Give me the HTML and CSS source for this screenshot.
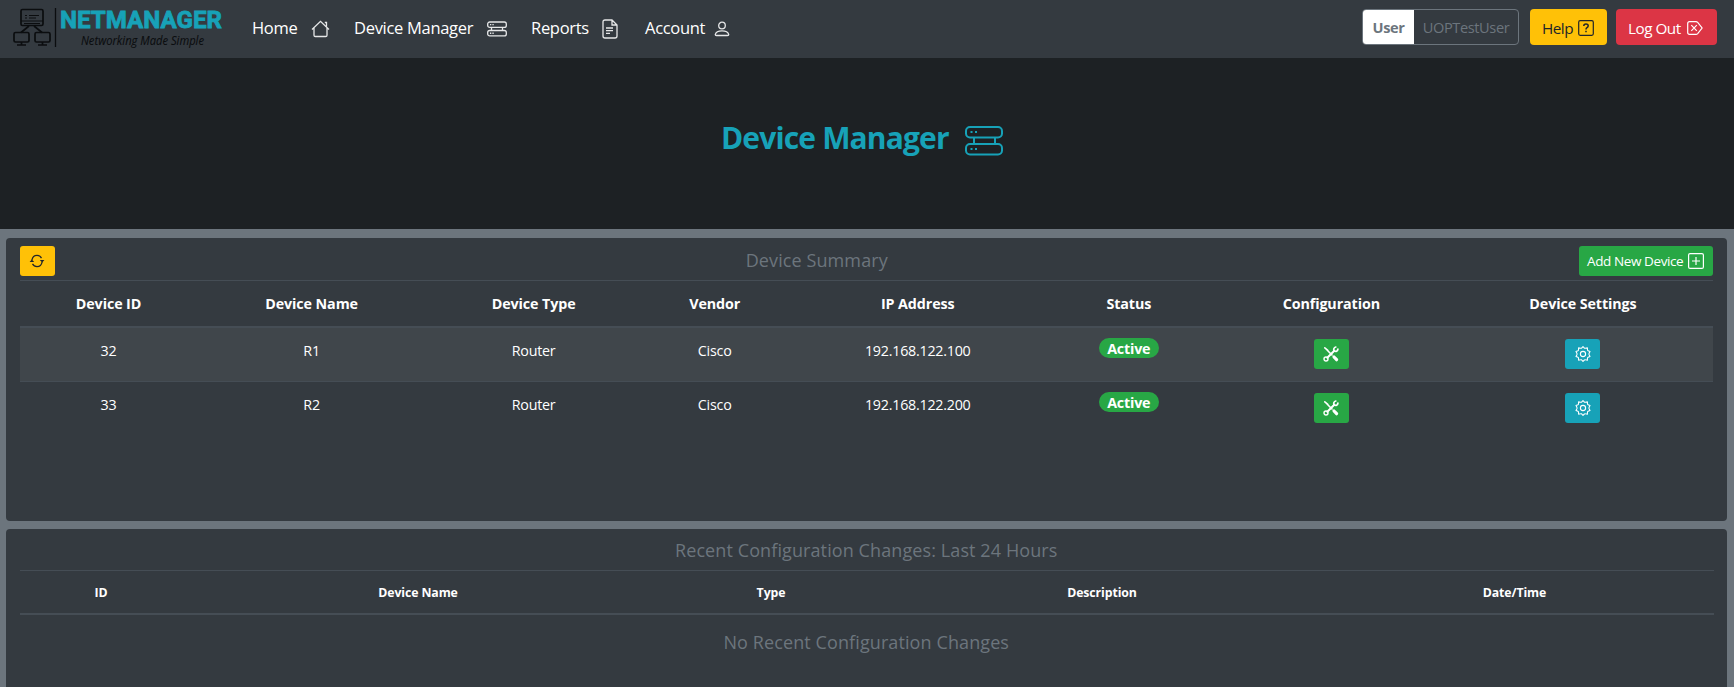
FILE: index.html
```html
<!DOCTYPE html>
<html lang="en">
<head>
<meta charset="utf-8">
<title>Device Manager</title>
<link rel="stylesheet" href="styles.css">
</head>
<body>
<svg class="defs" width="0" height="0">
  <symbol id="stack" viewBox="0 0 38 30"><g fill="none" stroke="currentColor" stroke-width="2"><rect x="1" y="1" width="36" height="10.5" rx="4"/><rect x="1" y="18" width="36" height="10.5" rx="4"/><path d="M9 11.5V18M30 11.5V18"/></g><path fill="currentColor" d="M5.5 5h2v2h-2zM10 5h2v2h-2zM5.5 22h2v2h-2zM10 22h2v2h-2z"/></symbol>
  <symbol id="stack-bold" viewBox="0 0 20 16"><g fill="none" stroke="currentColor" stroke-width="1.3"><rect x=".7" y="1" width="18.600" height="5.400" rx="2"/><rect x=".7" y="9.500" width="18.600" height="5.400" rx="2"/><path d="M4.500 6.400v3.100M15.500 6.400v3.100"/></g><path fill="currentColor" d="M3 3h1.300v1.300H3zM5.400 3h1.300v1.300H5.400zM3 11.600h1.300v1.300H3zM5.400 11.600h1.300v1.300H5.400z"/></symbol>
  <symbol id="tools" viewBox="0 0 16 16"><g fill="none" stroke="currentColor" stroke-linecap="round"><path stroke-width="1.6" d="M1.8 1.8l3 2.6M4 4l5 5"/><path stroke-width="3.2" d="M11 11l2.6 2.7"/><path stroke-width="2" d="M4.3 11.7l7-7"/><path stroke-width="1.7" d="M14.9 3.2c-.2 2-2 2.700-3.600 1.700-1.200-1.500-.3-3.500 1.500-3.900"/><circle cx="3" cy="13" r="2" stroke-width="1.400"/></g></symbol>
  <symbol id="gear" viewBox="0 0 16 16"><g fill="none" stroke="currentColor" stroke-width="1.1" stroke-linejoin="round"><circle cx="8" cy="8" r="2.600"/><path d="M6.600 2.200L8 .7l1.400 1.500q.5.200 1 0l2-.3.100 2.100q.1.600.6.800l1.900.8-.9 1.700q-.2.700 0 1.400l.9 1.700-1.900.8q-.5.300-.6.800l-.1 2.100-2-.3q-.5-.1-1 .2L8 15.300l-1.400-1.500q-.5-.200-1 0l-2 .3-.1-2.100q-.1-.6-.6-.8L1 10.400l.9-1.700q.2-.700 0-1.400L1 5.600l1.900-.8q.5-.3.600-.8l.1-2.100 2 .3q.5.100 1 0z"/></g></symbol>
</svg>

<header class="navbar">
  <svg class="logo" viewBox="0 0 230 58" width="230" height="58">
    <g fill="none" stroke="#0b0d0f" stroke-width="1.7">
      <rect x="21" y="9.500" width="22" height="16" rx="1.500"/><path d="M21 21h22M25 15.500h2M29 15.500h10M25 18h2M29 18h7M24 23.500h16" stroke-width="1.200"/>
      <path d="M29 26l-8 6.500M34 26l8 6.500"/>
      <rect x="14" y="32.500" width="15" height="9.500" rx="1.500"/><rect x="35" y="32.500" width="15" height="9.500" rx="1.500"/>
      <path d="M17 45h9M38 45h9M21.500 42v3M42.500 42v3"/>
    </g>
    <path d="M55.500 8v39" stroke="#0b0d0f" stroke-width="1.300"/>
    <text class="brand" x="60" y="28" textLength="162" lengthAdjust="spacingAndGlyphs">NETMANAGER</text>
    <text class="tagline" x="81" y="45" textLength="123" lengthAdjust="spacingAndGlyphs">Networking Made Simple</text>
  </svg>
  <nav class="menu">
    <a class="home">Home <svg width="19" height="18" viewBox="0 0 19 18"><path d="M1 9.500L9.500 1.300 18 9.500M3 8v7.200q0 1.300 1.300 1.300h10.400q1.300 0 1.300-1.300V8M13.800 2.500h1.700v4"/></svg></a>
    <a class="devices">Device Manager <svg class="filled" width="20" height="16"><use href="#stack-bold"/></svg></a>
    <a class="reports">Reports <svg width="16" height="20" viewBox="0 0 16 20"><path d="M10 1H3Q1 1 1 3v14q0 2 2 2h10q2 0 2-2V6zV6h5M4 9h7M4 11.700h7M4 14.400h4"/></svg></a>
    <a class="account">Account <svg width="16" height="16" viewBox="0 0 16 16"><circle cx="8" cy="4.500" r="3.300"/><path d="M2.500 14.500q-1.300 0-1.200-1.200C2 10.700 4.500 9.900 8 9.900s6 .8 6.700 3.400q.1 1.200-1.200 1.200z"/></svg></a>
  </nav>
  <div class="actions">
    <div class="user"><b>User</b><span>UOPTestUser</span></div>
    <button class="btn help"><span>Help</span><svg width="16" height="16" viewBox="0 0 16 16"><rect x=".7" y=".7" width="14.600" height="14.600" rx="1.500"/><path stroke-width="1.500" d="M5.800 6q0-2 2.200-2t2.200 1.800Q10.200 7 9 7.700 8 8.300 8 9.500M8 10.700v1.500"/></svg></button>
    <button class="btn logout"><span>Log Out</span><svg width="16" height="14" viewBox="0 0 16 14"><path d="M2.500.7H9q1 0 1.700.7l4.400 5.600-4.400 5.600q-.7.700-1.700.7H2.500Q.7 13.300.7 11.500v-9Q.7.700 2.500.7zM4.300 4.200l5.500 5.600M9.800 4.200L4.300 9.800"/></svg></button>
  </div>
</header>

<section class="hero"><h1>Device Manager</h1><svg width="38" height="30"><use href="#stack"/></svg></section>

<main>
  <section class="panel summary">
    <div class="panel-head">
      <button class="btn small refresh"><svg width="16" height="16" viewBox="0 0 16 16"><path d="M2.900 7.200C3.400 4.300 5.500 2.400 8 2.400c2 0 3.600 1 4.500 2.700M13.100 8.800c-.5 2.900-2.600 4.800-5.100 4.800-2 0-3.600-1-4.500-2.700"/><path class="solid" d="M.600 9l2.200-2.400L5.200 9zM10.800 7h4.600l-2.200 2.400z"/></svg></button>
      <h2>Device Summary</h2>
      <button class="btn small add"><span>Add New Device</span><svg width="16" height="16" viewBox="0 0 16 16"><rect x=".6" y=".6" width="14.800" height="14.800" rx="1.500"/><path d="M8 4v8M4 8h8"/></svg></button>
    </div>
    <table class="devices-table">
      <colgroup><col class="d1"><col class="d2"><col class="d3"><col class="d4"><col class="d5"><col class="d6"><col class="d7"><col class="d8"></colgroup>
      <thead><tr><th>Device ID</th><th>Device Name</th><th>Device Type</th><th>Vendor</th><th>IP Address</th><th>Status</th><th>Configuration</th><th>Device Settings</th></tr></thead>
      <tbody>
        <tr class="odd"><td>32</td><td>R1</td><td>Router</td><td>Cisco</td><td>192.168.122.100</td><td><span class="badge">Active</span></td><td><button class="btn small config"><svg width="16" height="16"><use href="#tools"/></svg></button></td><td><button class="btn small settings"><svg width="16" height="16"><use href="#gear"/></svg></button></td></tr>
        <tr><td>33</td><td>R2</td><td>Router</td><td>Cisco</td><td>192.168.122.200</td><td><span class="badge">Active</span></td><td><button class="btn small config"><svg width="16" height="16"><use href="#tools"/></svg></button></td><td><button class="btn small settings"><svg width="16" height="16"><use href="#gear"/></svg></button></td></tr>
      </tbody>
    </table>
  </section>
  <section class="panel changes">
    <div class="panel-head"><h2>Recent Configuration Changes: Last 24 Hours</h2></div>
    <table class="changes-table">
      <colgroup><col class="c1"><col class="c2"><col class="c3"><col class="c4"><col class="c5"></colgroup>
      <thead><tr><th>ID</th><th>Device Name</th><th>Type</th><th>Description</th><th>Date/Time</th></tr></thead>
    </table>
    <p class="empty">No Recent Configuration Changes</p>
  </section>
</main>
</body>
</html>
```
FILE: styles.css
```css
* { box-sizing: border-box; }
html, body { height: 100%; }
body { margin: 0; overflow: hidden; background: #6c757d; color: #fff; font-family: "Open Sans", "Noto Sans", sans-serif; font-size: 15px; }
.defs { display: none; }
h1, h2, p { margin: 0; }

.navbar { display: flex; height: 58px; background: #343a40; }
.logo { flex: none; }
.brand { font: 700 24.500px Roboto, sans-serif; fill: #17a2b8; stroke: #17a2b8; stroke-width: .8; }
.tagline { font: italic 12px "Open Sans", sans-serif; fill: #0b0d0f; stroke: #0b0d0f; stroke-width: .1; }
.menu { display: flex; align-items: center; height: 55px; padding-left: 22px; font-size: 16.500px; letter-spacing: -.3px; }
.menu a { display: flex; align-items: center; justify-content: space-between; white-space: nowrap; }
.menu svg { fill: none; stroke: #e6e7e8; stroke-width: 1.300; margin-top: 2px; }
.menu svg.filled { stroke: none; color: #e6e7e8; }
.home { width: 78px; margin-right: 24px; }
.devices { width: 153px; margin-right: 24px; }
.reports { width: 87px; margin-right: 27px; }
.account { width: 85px; }
.actions { display: flex; margin-left: auto; padding: 9px 17px 0 0; }

.btn { display: flex; align-items: center; border: 0; border-radius: 4px; margin: 0; padding: 0; color: #fff; font: 15.300px "Open Sans", sans-serif; letter-spacing: -.5px; white-space: nowrap; }
.btn svg { flex: none; fill: none; stroke: currentColor; stroke-width: 1.200; }
.btn use { stroke: none; }
.btn .solid { fill: currentColor; stroke: none; }
.actions .btn { justify-content: space-between; height: 36px; padding-top: 2px; }
.actions .help { width: 77px; padding-left: 12px; padding-right: 13px; margin: 0 9px 0 11px; background: #ffc107; color: #212529; }
.actions .logout { width: 101px; padding-left: 12px; padding-right: 14px; background: #dc3545; }
.user { display: flex; width: 157px; height: 36px; border: 1px solid #6c757d; border-radius: 4px; overflow: hidden; align-items: center; font-size: 14.600px; letter-spacing: -.4px; line-height: 36px; text-align: center; }
.user b { width: 51px; background: #fff; color: #6c757d; }
.user span { flex: 1; color: #6c757d; }

.hero { display: flex; align-items: center; height: 171px; padding: 0 0 11px 721px; gap: 17px; background: #1d2124; color: #17a2b8; }
.hero h1 { width: 227px; font-size: 30px; line-height: 40px; font-weight: 700; letter-spacing: -.85px; white-space: nowrap; }
.hero svg { flex: none; margin-top: 5px; }

main { display: flex; flex-direction: column; gap: 8px; padding: 9px 7px 0 5.500px; }
.panel { background: #343a40; border-radius: 4px; padding: 0 14px; }
.summary { height: 283px; }
.changes { height: 170px; }
.panel-head { display: flex; justify-content: space-between; align-items: center; height: 42px; }
.changes .panel-head { justify-content: center; height: 41px; }
h2, .empty { color: #6c757d; font-size: 18px; font-weight: 500; line-height: 24px; letter-spacing: .1px; white-space: nowrap; }
.summary h2 { padding-top: 2px; }
.small { height: 30px; border-radius: 3px; justify-content: center; font-size: 13.500px; letter-spacing: -.4px; margin-top: 4px; }
.refresh { width: 35px; background: #ffc107; color: #212529; }
.add { width: 134px; background: #28a745; justify-content: space-between; padding: 0 9px 0 8px; }

table { width: 100%; table-layout: fixed; border-collapse: separate; border-spacing: 0; text-align: center; }
th, td { padding: 0; vertical-align: top; }
th { border-top: 1px solid #454d55; border-bottom: 2px solid #454d55; font-weight: 700; }
.devices-table { font-size: 14.300px; letter-spacing: -.25px; }
.devices-table th { height: 48px; padding-top: 13px; line-height: 20px; letter-spacing: -.1px; }
.devices-table td { height: 53px; padding-top: 13px; line-height: 20px; }
.odd td { background: #40464b; }
.devices-table tbody tr:nth-child(2) td { border-top: 1px solid #454d55; }
.devices-table td .small { margin: -2px auto 0; width: 35px; }
.devices-table td:nth-child(6) { padding-top: 10px; }
.config { background: #28a745; }
.settings { background: #17a2b8; }
.badge { display: block; width: 60px; height: 20px; margin: 0 auto; border-radius: 10px; background: #28a745; font-weight: 700; line-height: 21px; letter-spacing: -.2px; }
.d1 { width: 178px; } .d2 { width: 228px; } .d3 { width: 216px; } .d4 { width: 146px; }
.d5 { width: 260px; } .d6 { width: 162px; } .d7 { width: 243px; } .d8 { width: 260px; }
.changes-table { font-size: 12.300px; letter-spacing: -.1px; }
.changes-table th { height: 45px; padding-top: 13px; line-height: 18px; }
.c1 { width: 163px; } .c2 { width: 471px; } .c3 { width: 235px; } .c4 { width: 427px; } .c5 { width: 398px; }
.empty { padding-top: 15px; text-align: center; }
```
